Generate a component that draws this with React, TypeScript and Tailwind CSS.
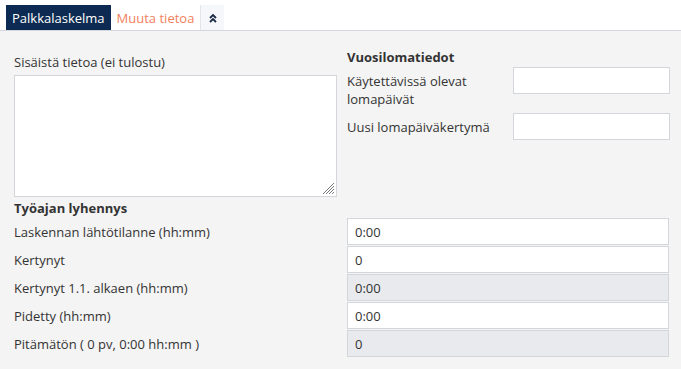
import React from 'react';

const font = { fontFamily: '"Open Sans", "Liberation Sans", sans-serif' };

const rows: { label: string; value: string; disabled?: boolean }[] = [
  { label: 'Laskennan lähtötilanne (hh:mm)', value: '0:00' },
  { label: 'Kertynyt', value: '0' },
  { label: 'Kertynyt 1.1. alkaen (hh:mm)', value: '0:00', disabled: true },
  { label: 'Pidetty (hh:mm)', value: '0:00' },
  { label: 'Pitämätön ( 0 pv, 0:00 hh:mm )', value: '0', disabled: true },
];

const inputBase =
  'h-[27px] border border-[#d3d6db] px-[7px] text-[13px] text-[#333] outline-none';

export default function App() {
  return (
    <div className="w-[681px] h-[369px] bg-[#f4f4f4] text-[#333] text-[13px] leading-[18px] overflow-hidden" style={font}>
      {/* tabs */}
      <div className="flex bg-white pt-[5px] pl-[6px] border-b border-[#d3d6db]">
        <div className="h-[25px] px-[6px] flex items-center bg-[#0d2b52] text-white">Palkkalaskelma</div>
        <div className="h-[25px] px-[6px] flex items-center bg-white text-[#f27f5e] border-r border-[#e2e5e9]">Muuta tietoa</div>
        <div className="h-[25px] w-[23px] flex items-center justify-center bg-[#f5f7fa]">
          <svg width="8" height="10" viewBox="0 0 8 10" fill="none" stroke="#1d2a44" strokeWidth="1.8">
            <path d="M1 5 L4 2 L7 5" />
            <path d="M1 9 L4 6 L7 9" />
          </svg>
        </div>
      </div>

      <div className="pl-[14px] pr-[11px]">
        <div className="flex gap-[10px]">
          <div className="w-[323px] shrink-0 pt-[22px] flex flex-col">
            <div>Sisäistä tietoa (ei tulostu)</div>
            <div className="relative mt-[4px]">
              <textarea className="w-[323px] h-[122px] bg-white border border-[#d3d6db] outline-none block resize-none" />
              {/* resize grip */}
              <svg className="absolute right-[2px] bottom-[2px]" width="13" height="13" viewBox="0 0 13 13" stroke="#7a7a7a" strokeWidth="1">
                <path d="M12 1 L1 12" />
                <path d="M12 4 L4 12" />
                <path d="M12 7 L7 12" />
                <path d="M12 10 L10 12" />
              </svg>
            </div>
          </div>
          <div className="w-[323px] shrink-0 pt-[17px]">
            <div className="font-bold h-[19px]">Vuosilomatiedot</div>
            <div className="flex items-start">
              <div className="w-[166px] pt-[5px]">Käytettävissä olevat lomapäivät</div>
              <input className={`${inputBase} w-[157px] bg-white`} />
            </div>
            <div className="flex items-start mt-[5px]">
              <div className="w-[166px] pt-[5px]">Uusi lomapäiväkertymä</div>
              <input className={`${inputBase} w-[157px] bg-white`} />
            </div>
          </div>
        </div>

        <div className="font-bold mt-[2px]">Työajan lyhennys</div>
        <div className="flex flex-col gap-[1px] mt-[1px]">
          {rows.map((r) => (
            <div key={r.label} className="flex items-center gap-[10px]">
              <div className="w-[323px] shrink-0">{r.label}</div>
              <input
                readOnly
                value={r.value}
                className={`${inputBase} w-[322px] shrink-0 ${r.disabled ? 'bg-[#e8eaed]' : 'bg-white'}`}
                style={font}
              />
            </div>
          ))}
        </div>
      </div>
    </div>
  );
}
